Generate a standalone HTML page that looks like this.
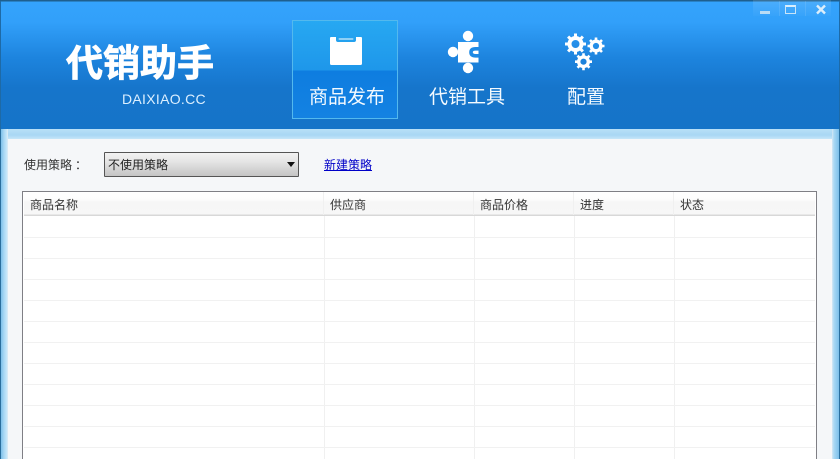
<!DOCTYPE html>
<html lang="zh">
<head>
<meta charset="utf-8">
<style>
html,body{margin:0;padding:0;width:840px;height:459px;overflow:hidden;background:#f5f7f9;}
*{box-sizing:border-box;}
.a{position:absolute;white-space:nowrap;}
body{font-family:"Liberation Sans","Noto Sans CJK SC",sans-serif;position:relative;}
.cell{font-size:12px;line-height:16px;color:#333;font-family:"Liberation Sans","Noto Sans CJK SC",sans-serif;}
.nav{font-size:19px;line-height:26px;color:#f4faff;top:85px;}
</style>
</head>
<body>
<div class="a" style="left:0;top:0;width:840px;height:129px;background:linear-gradient(to bottom,#1e5f8e 0,#1e5f8e 1px,#34a3fc 2px,#32a0fa 22px,#1d84de 58px,#1675cb 88px,#1574c8 129px);"></div>
<div class="a" style="left:0;top:1px;width:1px;height:128px;background:#1e6aa6;"></div>
<div class="a" style="left:839px;top:1px;width:1px;height:128px;background:#1e6aa6;"></div>
<div class="a" style="left:0;top:129px;width:840px;height:11px;background:linear-gradient(to bottom,#b8e0f7,#a8d7f4 6px,#cde9f9);"></div>
<div class="a" style="left:0;top:129px;width:8px;height:330px;background:linear-gradient(to right,#2a6f9e 0,#2a6f9e 1px,#7cc0ea 1px,#a9d8f4 4px,#c8e8fa 7px,#e4edf2 8px);"></div>
<div class="a" style="left:832px;top:129px;width:8px;height:330px;background:linear-gradient(to right,#d6e9f5 0,#a9d8f4 2px,#7cc0ea 7px,#2a6f9e 7px);"></div>
<div class="a" style="left:8px;top:139px;width:824px;height:320px;background:#f5f7f9;"></div>

<!-- window buttons -->
<div class="a" style="left:753px;top:0;width:78px;height:16px;background:linear-gradient(to bottom,rgba(255,255,255,.12),rgba(255,255,255,.02));"></div>
<div class="a" style="left:779px;top:1px;width:1px;height:15px;background:rgba(255,255,255,.1);"></div>
<div class="a" style="left:805px;top:1px;width:1px;height:15px;background:rgba(255,255,255,.1);"></div>
<div class="a" style="left:760px;top:11px;width:10px;height:3px;background:#b9dcf5;"></div>
<div class="a" style="left:785px;top:5px;width:11px;height:9px;border:1px solid #c8e4f8;border-top:2px solid #d8eefc;"></div>
<svg class="a" style="left:815px;top:4px" width="12" height="11" viewBox="0 0 12 11"><path d="M2 1.5L10 9.5M10 1.5L2 9.5" stroke="#dceefb" stroke-width="2.4"/></svg>

<!-- logo -->
<div class="a" style="left:66px;top:37px;font-size:37px;line-height:46px;font-weight:700;color:#fff;font-family:'Noto Sans CJK SC',sans-serif;-webkit-text-stroke:.8px #fff;">代销助手</div>
<div class="a" style="left:122px;top:91px;font-size:14px;line-height:17px;letter-spacing:.3px;color:#dcefff;">DAIXIAO.CC</div>

<!-- selected tab -->
<div class="a" style="left:292px;top:20px;width:106px;height:99px;border:1px solid #53b9ee;background:linear-gradient(to bottom,#27a8f2 0,#1e97ea 49px,#0e7de0 50px,#1482e2 98px);"></div>

<!-- clipboard icon -->
<svg class="a" style="left:329px;top:36px" width="34" height="30" viewBox="0 0 34 30"><path d="M1 2Q1 1 2 1H7V4Q7 6 9 6H25Q27 6 27 4V1H32Q33 1 33 2V27.500Q33 29 31.500 29H2.500Q1 29 1 27.500Z" fill="#fff"/><rect x="9.500" y="2" width="15" height="2" rx="1" fill="#8fd0f5"/></svg>

<!-- puzzle icon -->
<svg class="a" style="left:446px;top:28px" width="36" height="46" viewBox="0 0 36 46"><g fill="#fff"><circle cx="22" cy="8" r="5.200"/><circle cx="22" cy="40" r="5.200"/><circle cx="7" cy="24" r="5.200"/><rect x="12" y="14" width="20.500" height="20.500"/></g><path d="M32.500 20.800H29.500Q25 20.800 25 24.300Q25 27.800 29.500 27.800H32.500" fill="none" stroke="#1e8ae5" stroke-width="3.600"/></svg>

<!-- gears icon -->
<svg class="a" style="left:564px;top:33px" width="42" height="40" viewBox="0 0 42 40">
<g fill="none" stroke="#fff">
<circle cx="11.500" cy="11" r="6" stroke-width="4"/>
<path d="M11.500 .5V21.500M1 11H22M4.100 3.600L18.900 18.400M18.900 3.600L4.100 18.400" stroke-width="3" stroke-dasharray="3.200 14.600"/>
<circle cx="32" cy="13" r="4.800" stroke-width="3.400"/>
<path d="M32 4.500V21.500M23.500 13H40.500M26 7L38 19M38 7L26 19" stroke-width="2.600" stroke-dasharray="2.800 11.400"/>
<circle cx="19.500" cy="28.700" r="4.800" stroke-width="3.400"/>
<path d="M19.500 20.200V37.200M11 28.700H28M13.500 22.700L25.500 34.700M25.500 22.700L13.500 34.700" stroke-width="2.600" stroke-dasharray="2.800 11.400"/>
</g></svg>

<div class="a nav" style="left:309px;">商品发布</div>
<div class="a nav" style="left:429px;">代销工具</div>
<div class="a nav" style="left:567px;">配置</div>

<!-- strategy row -->
<div class="a cell" style="left:24px;top:157px;">使用策略<span style="position:relative;left:3px;">：</span></div>
<div class="a" style="left:104px;top:152px;width:195px;height:25px;border:1px solid #555;border-radius:1px;background:linear-gradient(to bottom,#f2f2f2 0,#e6e6e6 8px,#c4c4c4 23px);"></div>
<div class="a cell" style="left:108px;top:157px;color:#222;">不使用策略</div>
<div class="a" style="left:287px;top:162px;width:0;height:0;border-left:4.500px solid transparent;border-right:4.500px solid transparent;border-top:5px solid #111;"></div>
<div class="a cell" style="left:324px;top:157px;color:#0000c8;text-decoration:underline;">新建策略</div>

<!-- table -->
<div class="a" style="left:22px;top:191px;width:795px;height:268px;background:#fff;border:1px solid #7f7f85;border-bottom:0;"></div>
<div class="a" style="left:24px;top:192px;width:791px;height:24px;background:linear-gradient(to bottom,#fff 0,#fdfdfd 7px,#f6f6f6 10px,#f7f7f7 22px,#d8d8d8 23px);"></div>
<div class="a" style="left:323px;top:192px;width:1px;height:23px;background:#f0f0f0;"></div>
<div class="a" style="left:473px;top:192px;width:1px;height:23px;background:#f0f0f0;"></div>
<div class="a" style="left:573px;top:192px;width:1px;height:23px;background:#f0f0f0;"></div>
<div class="a" style="left:673px;top:192px;width:1px;height:23px;background:#f0f0f0;"></div>
<div class="a cell" style="left:30px;top:197px;">商品名称</div>
<div class="a cell" style="left:330px;top:197px;">供应商</div>
<div class="a cell" style="left:480px;top:197px;">商品价格</div>
<div class="a cell" style="left:580px;top:197px;">进度</div>
<div class="a cell" style="left:680px;top:197px;">状态</div>

<div class="a" style="left:324px;top:216px;width:1px;height:243px;background:#f0f0f0;"></div>
<div class="a" style="left:474px;top:216px;width:1px;height:243px;background:#f0f0f0;"></div>
<div class="a" style="left:574px;top:216px;width:1px;height:243px;background:#f0f0f0;"></div>
<div class="a" style="left:674px;top:216px;width:1px;height:243px;background:#f0f0f0;"></div>

<div class="a" style="left:24px;top:237px;width:791px;height:1px;background:#f1f1f1;"></div>
<div class="a" style="left:24px;top:258px;width:791px;height:1px;background:#f1f1f1;"></div>
<div class="a" style="left:24px;top:279px;width:791px;height:1px;background:#f1f1f1;"></div>
<div class="a" style="left:24px;top:300px;width:791px;height:1px;background:#f1f1f1;"></div>
<div class="a" style="left:24px;top:321px;width:791px;height:1px;background:#f1f1f1;"></div>
<div class="a" style="left:24px;top:342px;width:791px;height:1px;background:#f1f1f1;"></div>
<div class="a" style="left:24px;top:363px;width:791px;height:1px;background:#f1f1f1;"></div>
<div class="a" style="left:24px;top:384px;width:791px;height:1px;background:#f1f1f1;"></div>
<div class="a" style="left:24px;top:405px;width:791px;height:1px;background:#f1f1f1;"></div>
<div class="a" style="left:24px;top:426px;width:791px;height:1px;background:#f1f1f1;"></div>
<div class="a" style="left:24px;top:447px;width:791px;height:1px;background:#f1f1f1;"></div>
</body>
</html>
